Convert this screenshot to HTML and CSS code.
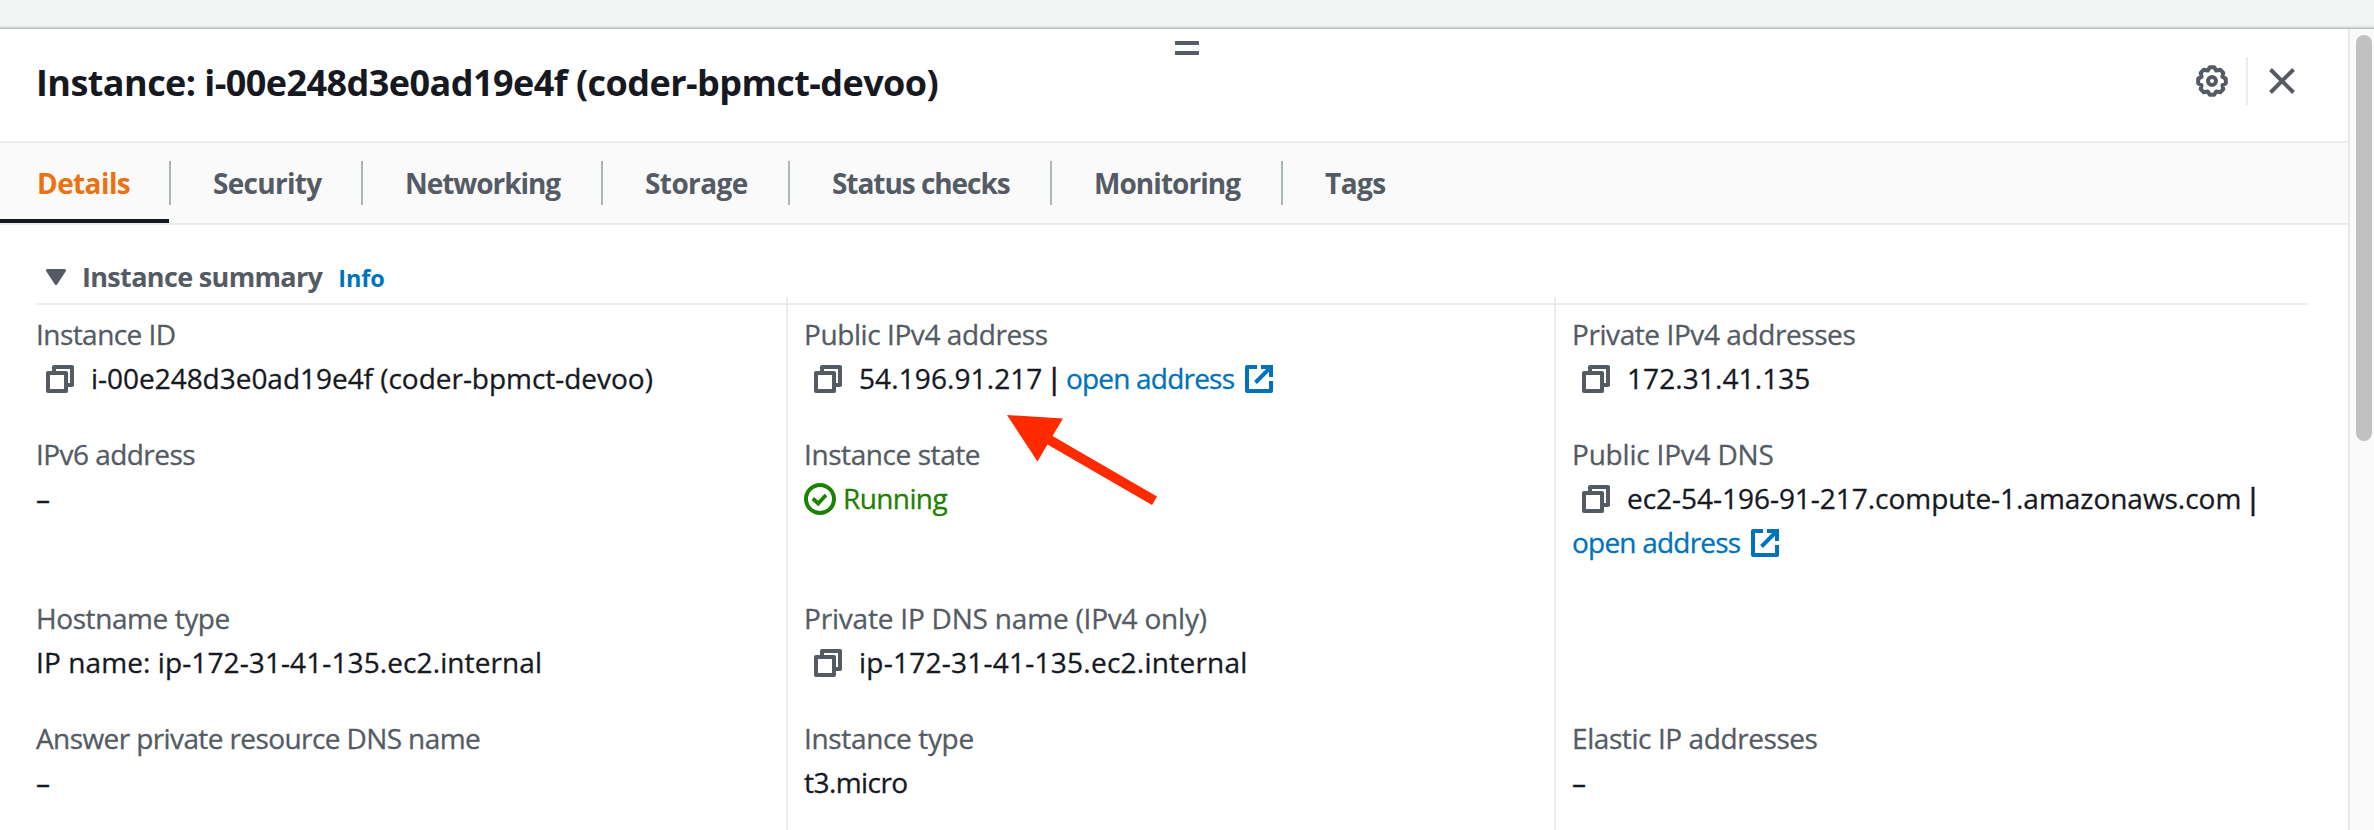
FILE: index.html
```
<!DOCTYPE html>
<html lang="en">
<head>
<meta charset="utf-8">
<title>Instance details</title>
<link rel="stylesheet" href="styles.css">
</head>
<body>
<svg class="defs" aria-hidden="true">
  <symbol id="copy" viewBox="0 0 28 28"><path d="M2 8h18v18H2zM8 8V2h18v18h-6" fill="none" stroke="currentColor" stroke-width="4" stroke-linejoin="round"/></symbol>
  <symbol id="external" viewBox="0 0 28 28"><path d="M12 2H2v24h24V16" fill="none" stroke="currentColor" stroke-width="4" stroke-linejoin="round"/><path d="M16 2h10v10M26 2L10.500 17.500" fill="none" stroke="currentColor" stroke-width="4"/></symbol>
</svg>
<div class="page">
  <div class="backdrop"></div>
  <div class="split">
    <main class="panel">
      <header class="head">
        <h1 class="title">Instance: i-00e248d3e0ad19e4f (coder-bpmct-devoo)</h1>
        <div class="handle"></div>
        <div class="tools">
          <svg class="gear" viewBox="-16 -16 32 32"><path d="M-2.200-13.800H2.200L4.300-10.400L8.200-11.300L11.300-8.200L10.400-4.300L13.800-2.200V2.200L10.400 4.300L11.300 8.200L8.200 11.300L4.300 10.400L2.200 13.800H-2.200L-4.300 10.400L-8.200 11.300L-11.300 8.200L-10.400 4.300L-13.800 2.200V-2.200L-10.400-4.300L-11.300-8.200L-8.200-11.300L-4.300-10.400Z"/><circle r="4"/></svg>
          <span class="rule"></span>
          <svg class="close" viewBox="0 0 26 26"><path d="M1.500 1.500l23 23M24.500 1.500l-23 23"/></svg>
        </div>
      </header>
      <nav class="tabs">
        <a class="tab active"><span class="s6">Details</span></a>
        <a class="tab"><span class="s7">Security</span></a>
        <a class="tab"><span class="s10">Networking</span></a>
        <a class="tab"><span class="s6">Storage</span></a>
        <a class="tab"><span class="s10">Status checks</span></a>
        <a class="tab"><span class="s9">Monitoring</span></a>
        <a class="tab"><span class="s5">Tags</span></a>
      </nav>
      <section class="summary">
        <div class="summary-head">
          <svg class="caret" viewBox="0 0 20 16"><path d="M1.500 1.500h17L10 14.500z"/></svg>
          <h2>Instance summary</h2>
          <a class="info">Info</a>
        </div>
        <div class="columns">
          <div class="column">
            <div class="field"><div class="label s5">Instance ID</div><div class="value"><svg class="copy"><use href="#copy"/></svg><span class="s1">i-00e248d3e0ad19e4f (coder-bpmct-devoo)</span></div></div>
            <div class="field tall"><div class="label s5">IPv6 address</div><div class="value">–</div></div>
            <div class="field"><div class="label s4">Hostname type</div><div class="value p1">IP name: ip-172-31-41-135.ec2.internal</div></div>
            <div class="field"><div class="label s6">Answer private resource DNS name</div><div class="value">–</div></div>
          </div>
          <div class="column">
            <div class="field"><div class="label s4">Public IPv4 address</div><div class="value"><svg class="copy"><use href="#copy"/></svg><span class="p1">54.196.91.217</span><span class="pipe">|</span><a class="link"><span class="s8">open address</span><svg class="ext"><use href="#external"/></svg></a></div></div>
            <div class="field tall"><div class="label s4">Instance state</div><div class="value running"><svg class="ok" viewBox="0 0 32 32"><circle cx="16" cy="16" r="14" stroke-width="4"/><path d="M8.800 15.500l5.400 5L22 12" stroke-width="3.800"/></svg><span class="s6">Running</span></div></div>
            <div class="field"><div class="label s2">Private IP DNS name (IPv4 only)</div><div class="value"><svg class="copy"><use href="#copy"/></svg><span class="p2">ip-172-31-41-135.ec2.internal</span></div></div>
            <div class="field"><div class="label s3">Instance type</div><div class="value s5">t3.micro</div></div>
          </div>
          <div class="column">
            <div class="field"><div class="label s4">Private IPv4 addresses</div><div class="value"><svg class="copy"><use href="#copy"/></svg><span class="p1">172.31.41.135</span></div></div>
            <div class="field tall"><div class="label s2">Public IPv4 DNS</div><div class="value"><svg class="copy"><use href="#copy"/></svg><span class="s1">ec2-54-196-91-217.compute-1.amazonaws.com</span><span class="pipe">|</span></div><div class="value"><a class="link"><span class="s8">open address</span><svg class="ext"><use href="#external"/></svg></a></div></div>
            <div class="field"></div>
            <div class="field"><div class="label s4">Elastic IP addresses</div><div class="value">–</div></div>
          </div>
        </div>
      </section>
    </main>
    <div class="scrollbar"><div class="thumb"></div></div>
  </div>
  <svg class="arrow" viewBox="0 0 150 90"><path d="M0 0L56 3.500L45.500 21L150 81.500L145 90L40.500 29.500L30.500 46.500Z"/></svg>
</div>
</body>
</html>
```
FILE: styles.css
```
* { box-sizing: border-box; }
body { margin: 0; font: 400 28px/44px "Open Sans", "Liberation Sans", sans-serif; color: #16191f; background: #fff; }
.defs { display: none; }
svg { display: block; flex: none; }
.page { position: relative; height: 830px; overflow: hidden; display: flex; flex-direction: column; white-space: nowrap; }
.backdrop { height: 29px; flex: none; background: linear-gradient(#f2f3f3 26px, #e4e7e7 26px 27px, #d5d9d9 27px 28px, #b5bbbe 28px); }
.split { flex: 1; display: flex; min-height: 0; }
.panel { flex: 1; min-width: 0; }

.head { height: 114px; border-bottom: 2px solid #eaeded; display: grid; grid-template-columns: 1139px 24px 1fr; padding: 0 53px 0 36px; }
.title { margin: 32px 0 0; font-size: 36px; line-height: 44px; font-weight: 700; letter-spacing: -0.560px; }
.handle { height: 14px; margin-top: 12px; border: solid #545b64; border-width: 4px 0; }
.tools { display: flex; justify-content: flex-end; align-items: center; height: 48px; margin-top: 28px; color: #545b64; }
.tools svg { fill: none; stroke: currentColor; stroke-width: 4; }
.gear { width: 32px; height: 32px; stroke-linejoin: round; }
.rule { width: 2px; height: 48px; background: #eaeded; margin: 0 21px 0 18px; }
.close { width: 26px; height: 26px; }

.tabs { height: 82px; background: #fafafa; border-bottom: 2px solid #eaeded; display: grid; grid-template-columns: 171px 192px 240px 187px 262px 231px auto; color: #545b64; font-weight: 700; }
.tab { display: flex; align-items: center; padding-left: 42px; height: 80px; background: linear-gradient(#aab7b8, #aab7b8) right top 18px / 2px 44px no-repeat; }
.tab:last-child { background: none; }
.tab.active { padding-left: 37px; color: #ec7211; background-image: linear-gradient(#16191f, #16191f), linear-gradient(#aab7b8, #aab7b8); background-position: left bottom, right top 18px; background-size: 169px 4px, 2px 44px; }

.summary-head { display: flex; align-items: center; height: 80px; margin: 0 41px 0 37px; padding: 26px 0 0 9px; border-bottom: 2px solid #eaeded; color: #545b64; }
.caret { width: 20px; height: 16px; fill: currentColor; stroke: currentColor; stroke-width: 3; stroke-linejoin: round; }
.summary h2 { margin: 0 0 0 16px; font-size: 27px; font-weight: 700; letter-spacing: -0.660px; }
.info { margin: 2px 0 0 16px; font-size: 23.500px; font-weight: 700; color: #0073bb; letter-spacing: -0.150px; }

.columns { display: grid; grid-template-columns: 786px 768px 1fr; margin-top: -8px; height: 533px; -webkit-text-stroke: 0.300px currentColor; }
.column { padding: 15px 0 0 16px; border-left: 2px solid #eaeded; }
.column:first-child { padding-left: 36px; border-left: 0; }
.field { height: 120px; }
.field.tall { height: 164px; }
.label { color: #545b64; height: 44px; }
.value { display: flex; align-items: center; height: 44px; }
.copy { width: 28px; height: 28px; margin: 2px 17px 0 10px; color: #545b64; }
.pipe { margin: 0 4px 0 4px; font-weight: 600; }
.link { display: flex; align-items: center; color: #0073bb; }
.ext { width: 28px; height: 28px; margin: 2px 0 0 11px; }
.running { color: #1d8102; }
.ok { width: 32px; height: 32px; margin: 2px 7px 0 0; fill: none; stroke: currentColor; }

.s1 { letter-spacing: -0.030px; }
.s2 { letter-spacing: -0.200px; }
.s3 { letter-spacing: -0.350px; }
.s4 { letter-spacing: -0.420px; }
.s5 { letter-spacing: -0.550px; }
.s6 { letter-spacing: -0.600px; }
.s7 { letter-spacing: -0.720px; }
.s8 { letter-spacing: -0.790px; }
.s9 { letter-spacing: -0.950px; }
.s10 { letter-spacing: -1.050px; }
.p1 { letter-spacing: 0.100px; }
.p2 { letter-spacing: 0.250px; }

.scrollbar { width: 26px; background: #fafafa; border-left: 2px solid #e8e8e8; padding: 6px 0 0 6px; }
.thumb { width: 16px; height: 406px; border-radius: 8px; background: #c1c1c1; }
.arrow { position: absolute; left: 1007px; top: 415px; width: 150px; height: 90px; fill: #ff2a00; }
```
